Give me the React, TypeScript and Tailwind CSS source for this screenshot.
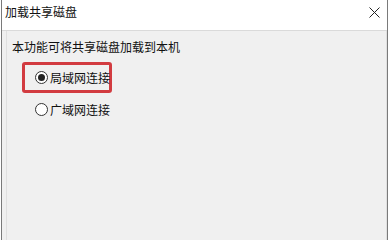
import React from "react";

const font = { fontFamily: '"Microsoft YaHei", "Noto Sans CJK SC", sans-serif' };

function Radio({ checked }: { checked?: boolean }) {
  return (
    <span className="w-[13px] h-[13px] rounded-full border border-[#333] bg-white flex items-center justify-center shrink-0">
      {checked && <span className="w-[7px] h-[7px] rounded-full bg-[#222]" />}
    </span>
  );
}

export default function App() {
  return (
    <div className="w-[390px] h-[240px] bg-white flex overflow-hidden" style={font}>
      <div className="ml-[1px] w-[387px] h-full border-x border-[#7a7a7a] flex flex-col">
        <div className="h-[30px] shrink-0 bg-white flex items-center justify-between pl-[3px] pr-[7px]">
          <span className="text-[12px] text-[#111] leading-none -mt-[6px] whitespace-nowrap">加载共享磁盘</span>
          <svg width="11" height="11" viewBox="0 0 11 11" className="-mt-[5px]">
            <path d="M0.5 0.5 L10.5 10.5 M10.5 0.5 L0.5 10.5" stroke="#222" strokeWidth="1" />
          </svg>
        </div>
        <div className="flex-1 bg-[#f0f0f0] border-t border-[#dadada] flex">
          <div className="ml-[4px] flex-1 border-l border-r border-[#e0e0e0] flex flex-col pl-[5px] pt-[8px]">
            <div className="text-[12px] text-[#111] leading-[16px] whitespace-nowrap">本功能可将共享磁盘加载到本机</div>
            <div className="mt-[7px] ml-[10px] w-[90px] h-[31px] border-[3px] border-[#d23b40] rounded-[3px] flex items-center pl-[10px] gap-[2px] whitespace-nowrap">
              <Radio checked />
              <span className="text-[12px] text-[#111] leading-none">局域网连接</span>
            </div>
            <div className="mt-[10px] ml-[23px] flex items-center gap-[2px] whitespace-nowrap">
              <Radio />
              <span className="text-[12px] text-[#111] leading-none">广域网连接</span>
            </div>
          </div>
        </div>
      </div>
    </div>
  );
}
